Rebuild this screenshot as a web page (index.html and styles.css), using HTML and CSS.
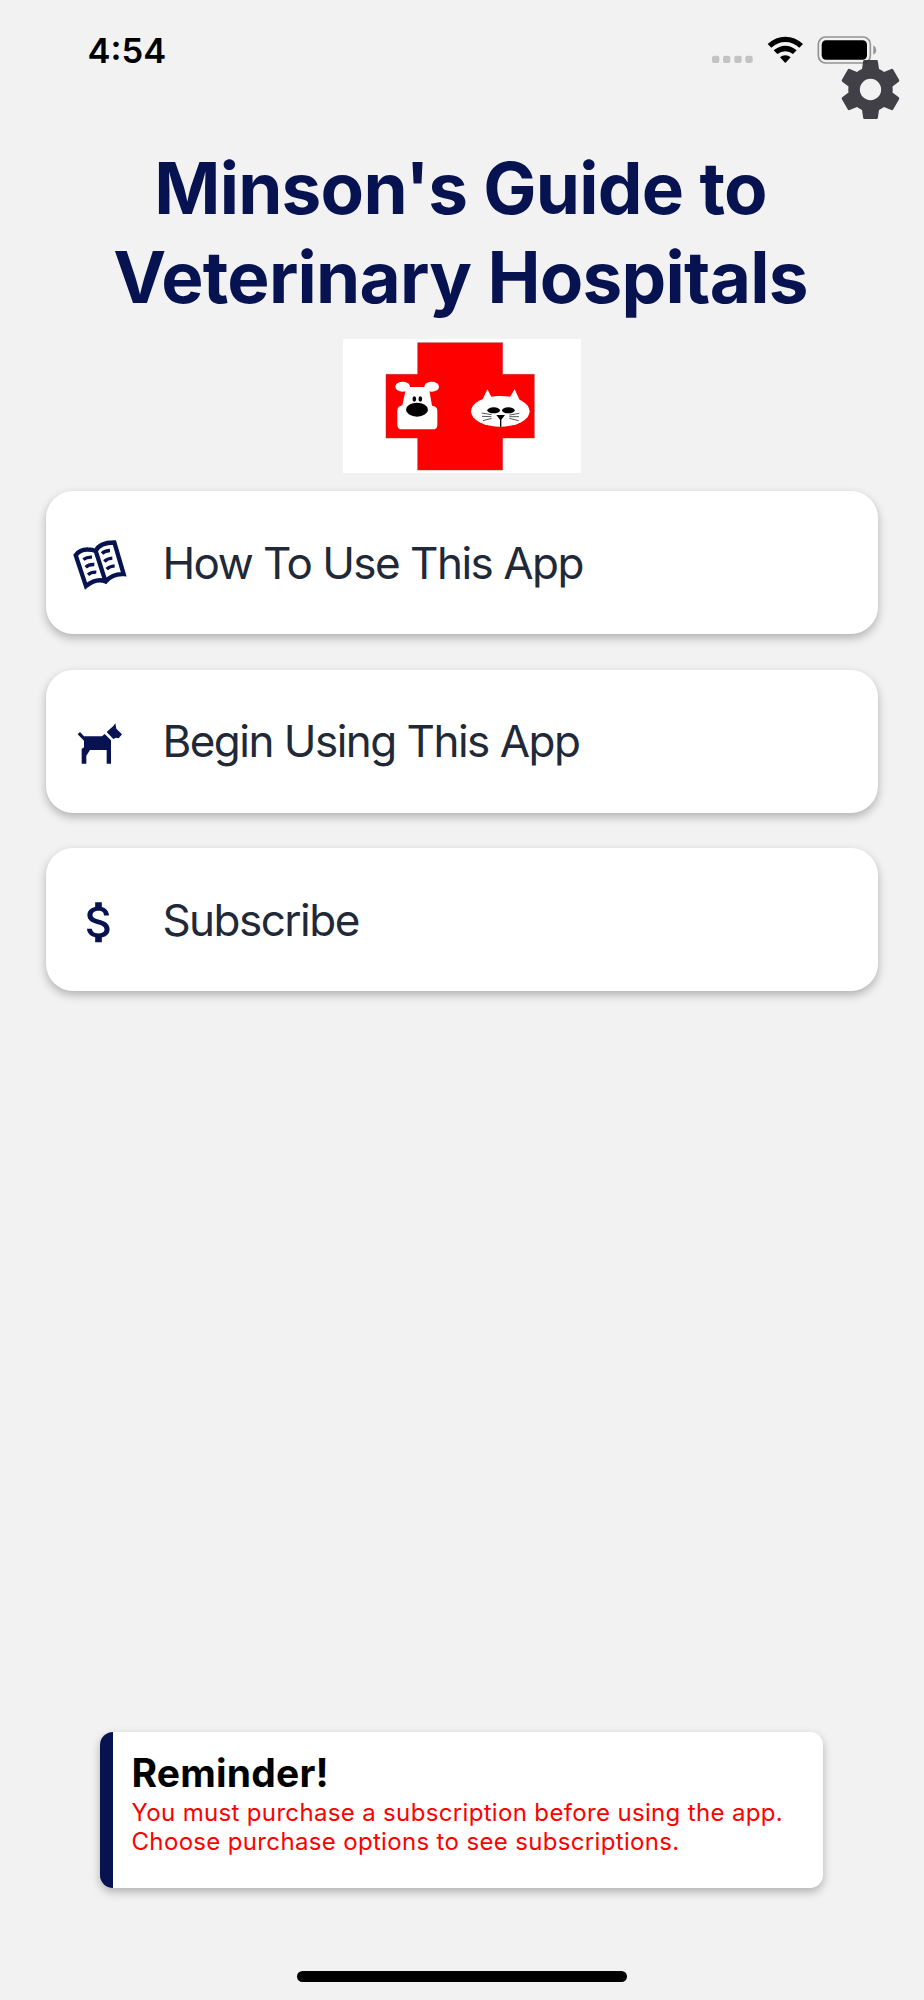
FILE: index.html
```html
<!DOCTYPE html>
<html lang="en">
<head>
<meta charset="utf-8">
<title>Minson's Guide to Veterinary Hospitals</title>
<link rel="stylesheet" href="styles.css">
</head>
<body>
<div class="screen">
  <header class="status">
    <span class="time">4:54</span>
    <svg class="indicators" viewBox="60 40 504 96" aria-hidden="true">
      <g fill="#c3c3c3">
        <rect x="66" y="108" width="22" height="22" rx="6"/>
        <rect x="99" y="108" width="22" height="22" rx="6"/>
        <rect x="133" y="108" width="22" height="22" rx="6"/>
        <rect x="166" y="108" width="22" height="22" rx="6"/>
      </g>
      <path d="M233 73Q257 51 286 51Q315 51 339 73L328 84Q309 67 286 67Q263 67 244 84ZM251 92Q267 78 286 78Q305 78 320 92L309 103Q299 95 286 95Q273 95 262 103ZM270 113Q277 107 286 107Q295 107 302 113L286 130Z"/>
      <rect x="385" y="52" width="156" height="78" rx="22" fill="none" stroke="#939393" stroke-width="5"/>
      <rect x="395" y="62" width="136" height="58" rx="13"/>
      <path d="M550 77Q559 82 559 91Q559 100 550 105Z" fill="#939393"/>
    </svg>
    <svg class="gear" viewBox="0 0 24 24" aria-label="Settings">
      <path d="M19.43 12.98c.04-.32.07-.64.07-.98s-.03-.66-.07-.98l2.11-1.65c.19-.15.24-.42.12-.64l-2-3.46c-.12-.22-.39-.3-.61-.22l-2.49 1c-.52-.4-1.08-.73-1.69-.98l-.38-2.65C14.46 2.18 14.25 2 14 2h-4c-.25 0-.46.18-.49.42l-.38 2.65c-.61.25-1.17.59-1.69.98l-2.49-1c-.23-.09-.49 0-.61.22l-2 3.46c-.13.22-.07.49.12.64l2.11 1.65c-.04.32-.07.65-.07.98s.03.66.07.98l-2.11 1.65c-.19.15-.24.42-.12.64l2 3.46c.12.22.39.3.61.22l2.49-1c.52.4 1.08.73 1.69.98l.38 2.65c.03.24.24.42.49.42h4c.25 0 .46-.18.49-.42l.38-2.65c.61-.25 1.17-.59 1.69-.98l2.49 1c.23.09.49 0 .61-.22l2-3.46c.12-.22.07-.49-.12-.64l-2.11-1.65zM12 15.6a3.6 3.6 0 1 1 0-7.2 3.6 3.6 0 0 1 0 7.2z"/>
    </svg>
  </header>

  <h1 class="title">Minson's Guide to<br>Veterinary Hospitals</h1>

  <svg class="logo" viewBox="39 27 714 402" aria-hidden="true">
    <rect x="39" y="27" width="714" height="402" fill="#fff"/>
    <path d="M263 38H518V133H613V324H518V420H263V324H168V133H263Z" fill="#f00" stroke="#a33a4a" stroke-width="1.5"/>
    <g fill="#fff">
      <ellipse cx="218" cy="170" rx="22" ry="15"/>
      <ellipse cx="305" cy="170" rx="22" ry="15"/>
      <path d="M232 171H291Q296 171 298 181L306 227Q322 228 322 242V284Q322 298 308 298H216Q202 298 202 284V242Q202 229 217 226L227 180Z"/>
      <ellipse cx="511" cy="244" rx="88" ry="46"/>
      <path d="M457 210L472 178L486 204ZM538 204L554 178L570 212Z"/>
    </g>
    <ellipse cx="253" cy="207" rx="5.5" ry="8"/>
    <ellipse cx="271" cy="207" rx="5.5" ry="8"/>
    <ellipse cx="261" cy="239" rx="33" ry="21"/>
    <ellipse cx="491" cy="241" rx="19" ry="9"/>
    <ellipse cx="535" cy="241" rx="19" ry="9"/>
    <path d="M499 255H525L514 269V290H510V269Z"/>
    <path d="M455 249L485 254M456 259L484 260M459 272L485 265M538 255L568 250M538 260L567 260M538 265L566 272" stroke="#000" stroke-width="2"/>
  </svg>

  <nav class="menu">
    <div class="card">
      <svg class="icon" viewBox="129 166.5 162 162" aria-hidden="true">
        <path d="M137 224Q150 206 174 207Q188 207 197 212Q208 186 253 186L281 281Q248 279 227 303Q200 291 168 317ZM197 211L227 304" fill="none" stroke="#061350" stroke-width="13"/>
        <path d="M160 237Q171 229 186 230M167 260Q177 251 193 252M174 283Q184 274 199 275M216 219Q224 211 240 210M223 243Q232 234 247 233M230 266Q239 257 254 256" fill="none" stroke="#061350" stroke-width="10"/>
      </svg>
      <span class="label">How To Use This App</span>
    </div>
    <div class="card">
      <svg class="icon" viewBox="129 162 162 162" aria-hidden="true">
        <path d="M150 216L162 229H216L224 222L243 241V311H230V270H180L169 287V311H155V267L162 262V242L143 223ZM256 190L259 206L276 223L266 235L258 233L250 237L230 216L250 198Z"/>
      </svg>
      <span class="label">Begin Using This App</span>
    </div>
    <div class="card">
      <svg class="icon" viewBox="129 157.5 162 162" aria-hidden="true">
        <path transform="translate(128.9 165.1) scale(6.66)" d="M11.8 10.9c-2.27-.59-3-1.2-3-2.15 0-1.09 1.01-1.85 2.7-1.85 1.78 0 2.44.85 2.5 2.1h2.21c-.07-1.72-1.12-3.3-3.21-3.81V3h-3v2.16c-1.94.42-3.5 1.68-3.5 3.61 0 2.31 1.91 3.46 4.7 4.13 2.5.6 3 1.48 3 2.41 0 .69-.49 1.79-2.7 1.79-2.06 0-2.87-.92-2.98-2.1h-2.2c.12 2.19 1.76 3.42 3.68 3.83V21h3v-2.15c1.95-.37 3.5-1.5 3.5-3.55 0-2.84-2.43-3.81-4.7-4.4z"/>
      </svg>
      <span class="label">Subscribe</span>
    </div>
  </nav>

  <section class="reminder">
    <h2>Reminder!</h2>
    <p>You must purchase a subscription before using the app.<br>Choose purchase options to see subscriptions.</p>
  </section>
  <div class="home"></div>
</div>
</body>
</html>
```
FILE: styles.css
```css
* { box-sizing: border-box; margin: 0; padding: 0; }
body { background: #f2f2f2; font-family: Inter, "Liberation Sans", sans-serif; white-space: nowrap; }
.screen { position: relative; width: 924px; height: 2000px; display: flex; flex-direction: column; align-items: center; }
svg { display: block; }

.status { width: 100%; height: 143.5px; padding: 30px 46px 0 87.5px; display: flex; justify-content: space-between; align-items: flex-start; }
.time { font-size: 34.5px; font-weight: 600; line-height: 41px; letter-spacing: 0; }
.indicators { width: 168px; height: 32px; margin: 3.3px 0 0; }
.gear { position: absolute; left: 834.8px; top: 54px; width: 71px; height: 71px; fill: #33333a; opacity: .93; }

.title { height: 179px; padding-right: 3px; font-size: 71px; font-weight: 700; line-height: 89.5px; letter-spacing: -.74px; color: #061350; text-align: center; }

.logo { width: 238px; height: 134px; margin-top: 16.5px; }

.menu { width: 832px; margin-top: 18px; display: flex; flex-direction: column; gap: 35.5px; }
.card { height: 143px; padding-left: 27px; display: flex; align-items: center; gap: 35.4px; background: #fff; border-radius: 27px; box-shadow: 0 4px 10px rgba(0, 0, 0, .27); font-size: 44px; color: #1f2937; }
.icon { width: 54px; height: 54px; fill: #061350; }
.label { letter-spacing: -1.52px; }

.reminder { width: 723px; height: 156px; margin: auto 1px 0 0; padding: 18px 0 0 18.5px; border-left: 13px solid #061350; border-radius: 13px; background: #fff; box-shadow: 0 4px 10px rgba(0, 0, 0, .27); }
.reminder h2 { font-size: 39px; font-weight: 700; line-height: 46px; letter-spacing: .2px; color: #000; }
.reminder p { margin-top: 1.6px; font-size: 24px; line-height: 29px; letter-spacing: .34px; color: #f00; }

.home { width: 330px; height: 11px; margin: 83px 0 18px; border-radius: 6px; background: #000; }
```
